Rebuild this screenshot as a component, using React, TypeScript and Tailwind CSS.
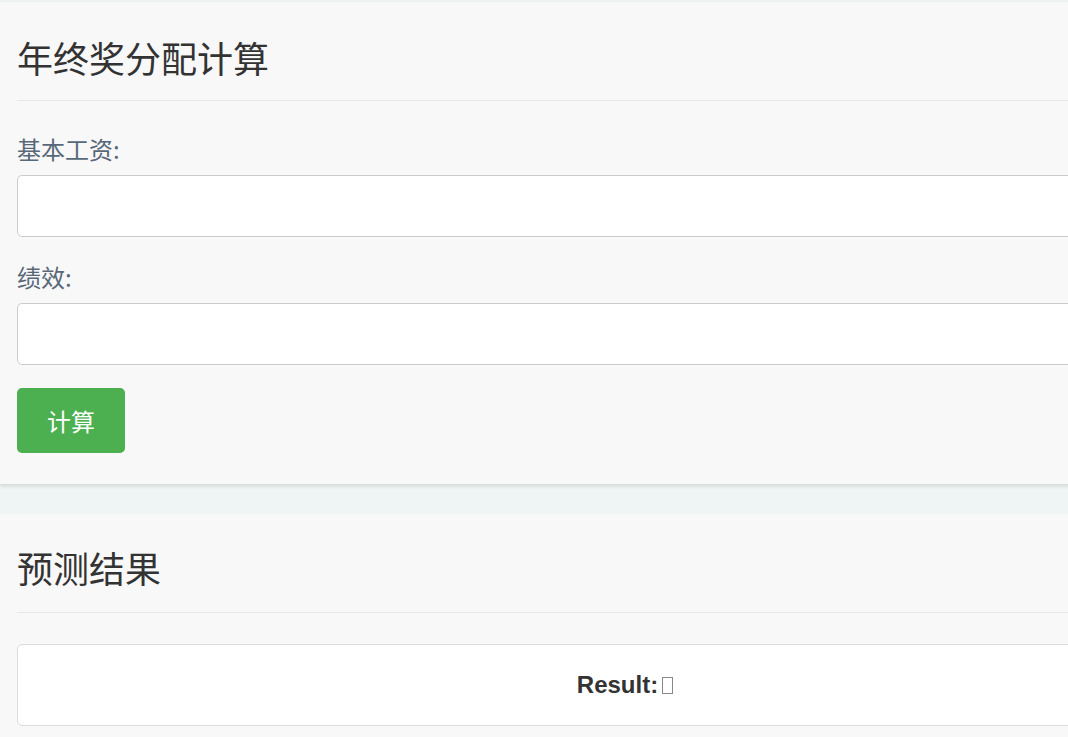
import React from "react";

const cjk = "font-['Noto_Sans_CJK_SC','Noto_Sans',sans-serif]";

const Field = ({ label, first }: { label: string; first?: boolean }) => (
  <div className={first ? "" : "mt-[26px]"}>
    <label className={`block text-[24px] leading-[28px] text-[#586878] ${cjk}`}>{label}</label>
    <input
      type="text"
      className="mt-[12px] block h-[62px] w-full rounded-[5px] border border-[#cccccc] bg-white px-3 outline-none"
    />
  </div>
);

export default function App() {
  return (
    <div className="w-full min-h-screen overflow-hidden bg-[#eff4f4]">
      <div className="w-[1250px] pt-[2px]">
        {/* 计算表单 */}
        <section className="bg-[#f8f8f8] px-[17px] pt-[17px] pb-[31px] shadow-[0_2px_4px_rgba(0,0,0,0.12)]">
          <h1 className={`mt-[18px] border-b border-[#e6e6e6] pb-[23px] text-[36px] leading-[40px] text-[#333] ${cjk}`}>
            年终奖分配计算
          </h1>
          <div className="mt-[34px]">
            <Field label="基本工资:" first />
            <Field label="绩效:" />
            <button
              className={`mt-[23px] h-[65px] w-[108px] rounded-[5px] bg-[#4caf50] text-[24px] text-white ${cjk}`}
            >
              计算
            </button>
          </div>
        </section>

        {/* 结果 */}
        <section className="mt-[30px] bg-[#f8f8f8] px-[17px] pt-[16px] pb-[40px]">
          <h2 className={`mt-[17px] border-b border-[#e6e6e6] pb-[25px] text-[36px] leading-[40px] text-[#333] ${cjk}`}>
            预测结果
          </h2>
          <div className="mt-[31px] flex h-[82px] items-center justify-center rounded-[5px] border border-[#dddddd] bg-white">
            <span className="flex items-center font-['Liberation_Sans',Arial,sans-serif] text-[24px] font-bold text-[#333]">
              Result:
              <span className="ml-[4px] inline-block h-[17px] w-[11px] border border-[#888]" />
            </span>
          </div>
        </section>
      </div>
    </div>
  );
}
